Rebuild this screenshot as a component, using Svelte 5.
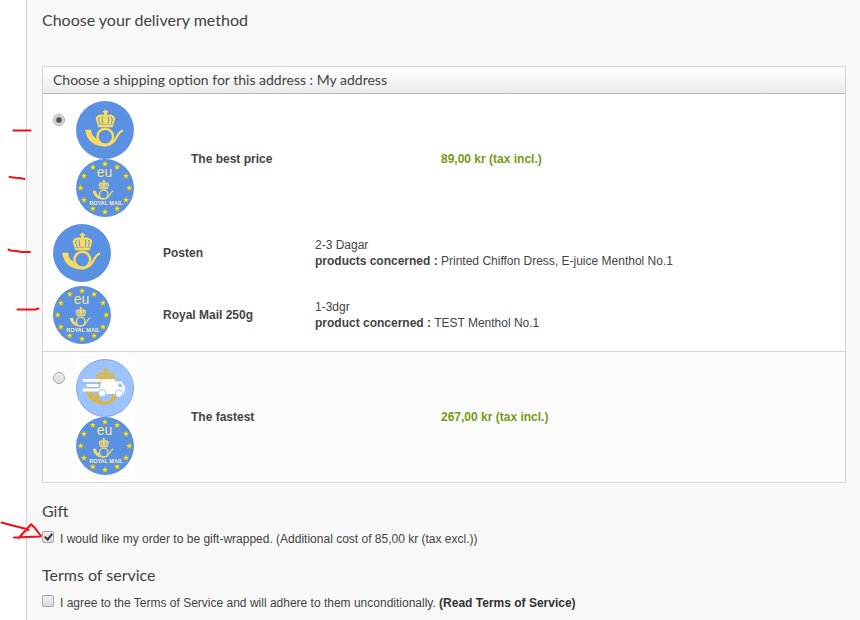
<script>
  let delivery = $state('best');
  let gift = $state(true);
  let terms = $state(false);

  const carriers = [
    { logo: 'posten', name: 'Posten', delay: '2-3 Dagar', label: 'products concerned :', products: 'Printed Chiffon Dress, E-juice Menthol No.1' },
    { logo: 'royal', name: 'Royal Mail 250g', delay: '1-3dgr', label: 'product concerned :', products: 'TEST Menthol No.1' }
  ];

  const options = [
    { id: 'best', name: 'The best price', price: '89,00 kr (tax incl.)', logos: ['posten', 'royal'], carriers },
    { id: 'fast', name: 'The fastest', price: '267,00 kr (tax incl.)', logos: ['express', 'royal'], carriers: [] }
  ];

  const star = Array.from({ length: 10 }, (_, i) => {
    const r = i % 2 ? 1.5 : 3.4;
    const a = (i * Math.PI) / 5;
    return `${(r * Math.sin(a)).toFixed(2)},${(-r * Math.cos(a)).toFixed(2)}`;
  }).join(' ');
  const stars = Array.from({ length: 12 }, (_, i) => {
    const a = (i * Math.PI) / 6;
    return [29 + 24.3 * Math.sin(a), 29 - 24 * Math.cos(a)];
  });
</script>

{#snippet emblem(fill, back)}
  <path fill={fill} d="M9.200 28.800h6c.3 4.500 2 7.200 5.300 9.200l4 6.800c-8.500-.8-14-6.800-15.300-16z" />
  <path fill={fill} d="M20 36c.5 4.500 3.500 7.800 9.500 7.300l1.500 2c-5.500.7-10.500-.8-12.500-4.300z" />
  <circle cx="29.300" cy="35.700" r="7.900" fill={back} stroke={fill} stroke-width="2.400" />
  <path fill="none" stroke={fill} stroke-width="2.200" d="M29 44.300c6 .2 9-3 11.500-7.800 1.800-3.600 3.500-6 6.500-7.200" />
  <path fill={fill} d="M22.300 26.300 19.800 18c0-3.500 4-5.300 8.200-4.300v-2.200h-1.300V10H28.500V8.700h2V10h1.800v1.500H31v2.200c4.200-1 8.200.8 8.200 4.300l-2.500 8.300z" />
  <g fill="none" stroke={back} stroke-width="1">
    <path d="M23.800 22.500c-1.500-3-1.300-5 0-6.500M27 22.500c-1.200-3-1-5.500 0-7M32 22.500c1.200-3 1-5.500 0-7M35.200 22.500c1.500-3 1.300-5 0-6.500" />
    <path stroke-width=".6" d="M22 23.300h15" />
  </g>
{/snippet}

{#snippet logo(kind)}
  <svg class="logo" viewBox="0 0 58 58" aria-hidden="true">
    {#if kind === 'posten'}
      <circle cx="29" cy="29" r="29" fill="#5b91e2" />
      {@render emblem('#f9db5c', '#5b91e2')}
    {:else if kind === 'royal'}
      <circle cx="29" cy="29" r="29" fill="#5b91e2" />
      {#each stars as [x, y]}
        <polygon points={star} transform="translate({x} {y})" fill="#f8e522" stroke="#92934d" stroke-width="0.4" />
      {/each}
      <text x="28.5" y="18" font-size="14" text-anchor="middle" fill="#f3e684">eu</text>
      <g transform="translate(11.9 16.1) scale(.54)">{@render emblem('#f0da70', '#5b91e2')}</g>
      <text x="30" y="46" font-size="5.5" font-weight="bold" text-anchor="middle" fill="#f7efb5">ROYAL MAIL</text>
    {:else}
      <circle cx="29" cy="29" r="28.500" fill="#9ec3fc" stroke="#80acf0" />
      {@render emblem('#d9b748', '#9ec3fc')}
      <g fill="#fff">
        <path d="M26 20.300h13v2.200h6.500l3.500 5.500-1 7.200-26-.5z" />
        <path stroke="#fff" stroke-width="2.800" stroke-linecap="round" d="M8 21.300h16M11.500 26.300h10M7.500 31h15" />
        <path fill="#9ec3fc" d="M42.300 24.200h2.700l2 3.800h-4.700z" />
        <g stroke="#9ec3fc" stroke-width="1">
          <circle cx="26.300" cy="34.200" r="3.700" />
          <circle cx="43" cy="34.600" r="3.700" />
        </g>
      </g>
    {/if}
  </svg>
{/snippet}

<main class="page">
  <section class="content">
    <h1>Choose your delivery method</h1>

    <div class="box">
      <h2>Choose a shipping option for this address : My address</h2>
      {#each options as option, i}
        <div class="option" class:alternate={i % 2 === 1}>
          <label class="choice">
            <input type="radio" name="delivery" value={option.id} bind:group={delivery} />
            <span class="logos">
              {#each option.logos as kind}{@render logo(kind)}{/each}
            </span>
            <strong class="name">{option.name}</strong>
            <strong class="price">{option.price}</strong>
          </label>
          {#if option.carriers.length}
            <table>
              <tbody>
                {#each option.carriers as carrier}
                  <tr>
                    <td class="carrier-logo">{@render logo(carrier.logo)}</td>
                    <th scope="row">{carrier.name}</th>
                    <td>{carrier.delay}<br /><strong>{carrier.label}</strong> {carrier.products}</td>
                  </tr>
                {/each}
              </tbody>
            </table>
          {/if}
        </div>
      {/each}
    </div>

    <h3>Gift</h3>
    <div class="check">
      <input id="gift" type="checkbox" bind:checked={gift} />
      <label for="gift">I would like my order to be gift-wrapped. (Additional cost of 85,00 kr (tax excl.))</label>
    </div>

    <h3>Terms of service</h3>
    <div class="check">
      <input id="terms" type="checkbox" bind:checked={terms} />
      <span><label for="terms">I agree to the Terms of Service and will adhere to them unconditionally.</label> <a href="#terms">(Read Terms of Service)</a></span>
    </div>
  </section>

  <svg class="marks" width="60" height="560" viewBox="0 0 60 560" aria-hidden="true">
    <path d="M13.500 130.500h17M9.500 177l6 .8 4 .2 5 1M8.500 249.500l2 1 6 .5 5 1h8.500M17.500 309.500h18l3-1" />
    <path d="M1.500 522.500l11 3 14 3.500 2 1M14 537.500l26-1M18.500 538.500l2-2.500 10.500-11.500 3 2.500 7 9" />
  </svg>
</main>

<style>
  :global(body) {
    margin: 0;
    background: #fff;
  }
  .page {
    position: relative;
    box-sizing: border-box;
    min-height: 100vh;
    padding-left: 26px;
    display: flex;
    font: 12px/16px "Liberation Sans", Arial, sans-serif;
    color: #444;
    overflow: hidden;
  }
  .content {
    flex: 1;
    border-left: 1px solid #d6d4d4;
    background: #f8f8f8;
    padding: 8px 14px 8px 15px;
  }
  h1, h2, h3 {
    margin: 0;
    font-family: Lato, "Open Sans", sans-serif;
    font-weight: 400;
    color: #444;
  }
  h1 {
    font-size: 16px;
    line-height: 24px;
    margin-bottom: 34px;
  }
  .box {
    border: 1px solid #d6d4d4;
    background: #fff;
    margin-bottom: 16px;
  }
  h2 {
    font-size: 14px;
    line-height: 26px;
    padding: 0 10px;
    border-bottom: 1px solid #bbb;
    background: linear-gradient(#fff, #ebebeb);
  }
  .option {
    padding: 7px 10px;
  }
  .alternate {
    background: #fcfcfc;
    border-top: 1px solid #d6d4d4;
  }
  .choice {
    display: flex;
    align-items: center;
  }
  .choice input {
    align-self: flex-start;
    margin-top: 13px;
  }
  .logos {
    margin: 0 57px 0 11px;
  }
  .logo {
    display: block;
    width: 58px;
    height: 58px;
    background: #fff;
    font-family: "Liberation Sans", Arial, sans-serif;
  }
  .name {
    width: 250px;
  }
  .price {
    color: #739b12;
  }
  table {
    width: 100%;
    margin-top: 7px;
    border-collapse: collapse;
  }
  td, th {
    padding: 0 0 4px;
    text-align: left;
    vertical-align: middle;
  }
  tr:last-child > * {
    padding-bottom: 0;
  }
  .carrier-logo {
    width: 110px;
  }
  th {
    width: 152px;
  }
  input {
    appearance: none;
    box-sizing: border-box;
    width: 12px;
    height: 12px;
    margin: 0;
    flex: none;
    border: 1px solid #a9a9a9;
    border-radius: 2px;
    background: linear-gradient(#ededed, #dcdcdc);
  }
  input[type="radio"] {
    border-radius: 50%;
  }
  input[type="radio"]:checked {
    background: radial-gradient(circle, #505050 0 2px, #e5e5e5 4px);
  }
  input[type="checkbox"]:checked {
    position: relative;
  }
  input[type="checkbox"]:checked::after {
    content: "";
    position: absolute;
    left: 3px;
    top: 0;
    width: 3px;
    height: 6px;
    border: solid #333;
    border-width: 0 2px 2px 0;
    transform: rotate(40deg);
  }
  h3 {
    font-size: 16px;
    line-height: 24px;
  }
  .check {
    display: flex;
    align-items: flex-start;
    gap: 6px;
    margin: 8px 0 16px;
  }
  a {
    color: #333;
    font-weight: bold;
    text-decoration: none;
  }
  .marks {
    position: absolute;
    left: 0;
    top: 0;
    pointer-events: none;
    fill: none;
    stroke: #f01015;
    stroke-width: 2;
    stroke-linecap: round;
  }
</style>
